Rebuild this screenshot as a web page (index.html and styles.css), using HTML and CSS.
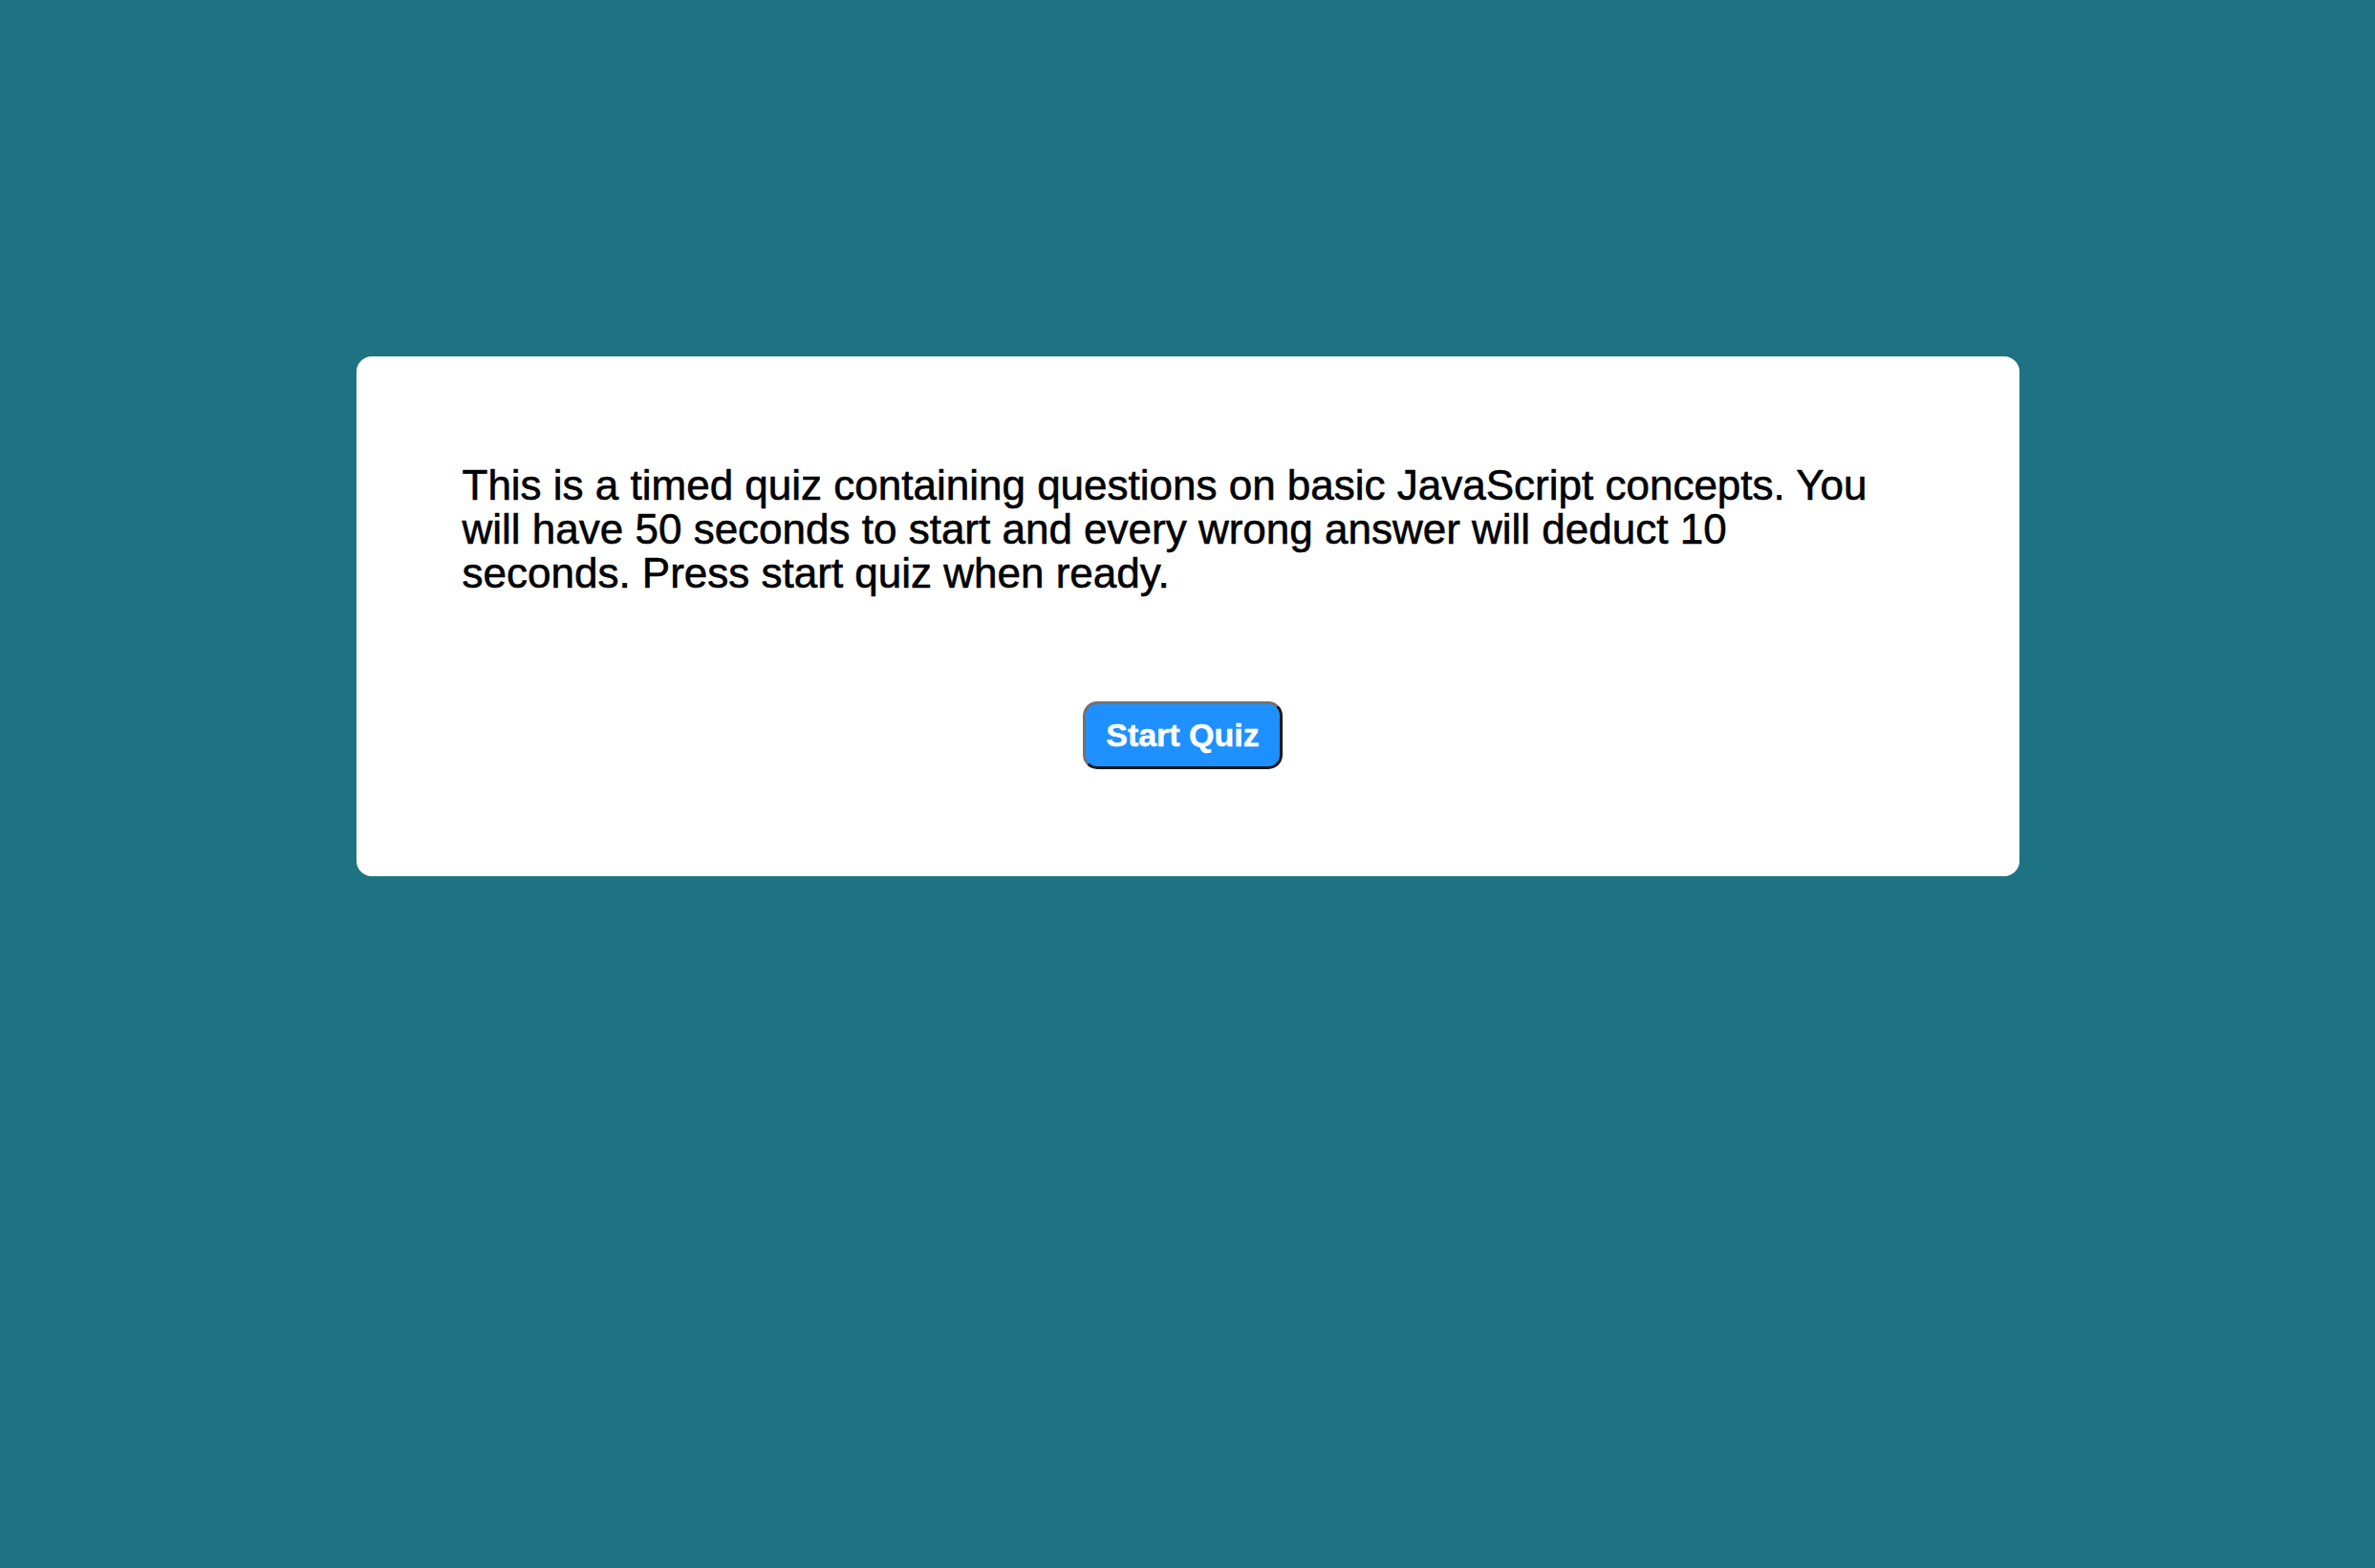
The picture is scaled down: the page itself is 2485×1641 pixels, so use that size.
FILE: index.html
```html
<!DOCTYPE html>
<html lang="en">
<head>
<meta charset="utf-8">
<title>JavaScript Quiz</title>
<link rel="stylesheet" href="styles.css">
</head>
<body>
<main class="page">
  <section class="card">
    <p class="intro">This is a timed quiz containing questions on basic JavaScript concepts. You will have 50 seconds to start and every wrong answer will deduct 10 seconds. Press start quiz when ready.</p>
    <div class="actions">
      <button class="start-btn" type="button">Start Quiz</button>
    </div>
  </section>
</main>
</body>
</html>
```
FILE: styles.css
```css
html, body {
  margin: 0;
  padding: 0;
}
body {
  background: #1e7382;
  font-family: "Liberation Sans", Arial, sans-serif;
  min-height: 100vh;
}
.page {
  display: flex;
  justify-content: center;
  padding-top: 373px;
}
.card {
  width: 1740px;
  box-sizing: border-box;
  background: #ffffff;
  border-radius: 16px;
  padding: 112px 111px 112px 111px;
  display: flex;
  flex-direction: column;
  gap: 111px;
}
.intro {
  margin: 0;
  max-width: 1490px;
  font-size: 44px;
  line-height: 46px;
  color: #000000;
  -webkit-text-stroke: 0.6px #000000;
}
.actions {
  display: flex;
  justify-content: center;
  padding-right: 10px;
}
.start-btn {
  font-family: "Liberation Sans", Arial, sans-serif;
  font-weight: bold;
  font-size: 34px;
  line-height: 39px;
  color: #ffffff;
  -webkit-text-stroke: 0.5px #ffffff;
  background: #1e90ff;
  border: 3px solid;
  border-color: #727272 #1a1a1a #1a1a1a #727272;
  border-radius: 15px;
  padding: 13px 21px;
  cursor: pointer;
}
```
